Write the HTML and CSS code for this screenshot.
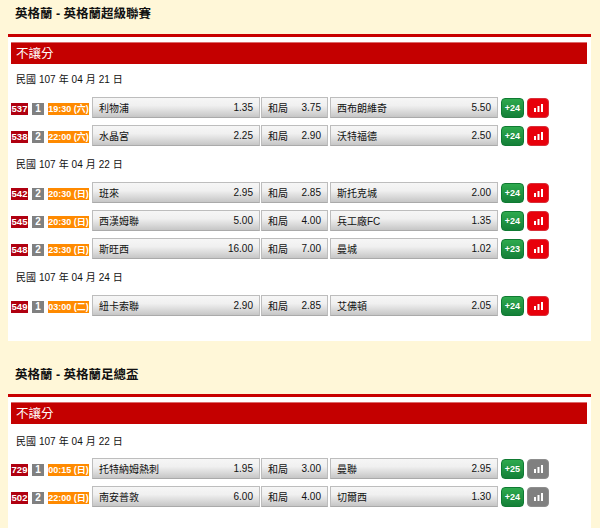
FILE: index.html
```html
<!DOCTYPE html>
<html lang="zh-Hant">
<head>
<meta charset="utf-8">
<title>英格蘭</title>
<link rel="stylesheet" href="styles.css">
</head>
<body>
<svg class="defs" width="0" height="0"><symbol id="bars" viewBox="0 0 9 8"><path d="M0 4h2v4H0zM3.500 2h2v6h-2zM7 0h2v8H7z" fill="currentColor"/></symbol></svg>

<section class="league">
  <h2 class="league-title">英格蘭 - 英格蘭超級聯賽</h2>
  <div class="panel">
    <h3 class="bar">不讓分</h3>
    <p class="date">民國 107 年 04 月 21 日</p>
    <div class="match">
      <span class="id">537</span><span class="num">1</span><span class="time">19:30 (六)</span>
      <div class="odd o-home"><span>利物浦</span><span>1.35</span></div>
      <div class="odd o-draw"><span>和局</span><span>3.75</span></div>
      <div class="odd o-away"><span>西布朗維奇</span><span>5.50</span></div>
      <span class="more">+24</span><span class="stat"><svg class="ico"><use href="#bars"/></svg></span>
    </div>
    <div class="match">
      <span class="id">538</span><span class="num">2</span><span class="time">22:00 (六)</span>
      <div class="odd o-home"><span>水晶宮</span><span>2.25</span></div>
      <div class="odd o-draw"><span>和局</span><span>2.90</span></div>
      <div class="odd o-away"><span>沃特福德</span><span>2.50</span></div>
      <span class="more">+24</span><span class="stat"><svg class="ico"><use href="#bars"/></svg></span>
    </div>
    <p class="date">民國 107 年 04 月 22 日</p>
    <div class="match">
      <span class="id">542</span><span class="num">2</span><span class="time">20:30 (日)</span>
      <div class="odd o-home"><span>班來</span><span>2.95</span></div>
      <div class="odd o-draw"><span>和局</span><span>2.85</span></div>
      <div class="odd o-away"><span>斯托克城</span><span>2.00</span></div>
      <span class="more">+24</span><span class="stat"><svg class="ico"><use href="#bars"/></svg></span>
    </div>
    <div class="match">
      <span class="id">545</span><span class="num">2</span><span class="time">20:30 (日)</span>
      <div class="odd o-home"><span>西漢姆聯</span><span>5.00</span></div>
      <div class="odd o-draw"><span>和局</span><span>4.00</span></div>
      <div class="odd o-away"><span>兵工廠FC</span><span>1.35</span></div>
      <span class="more">+24</span><span class="stat"><svg class="ico"><use href="#bars"/></svg></span>
    </div>
    <div class="match">
      <span class="id">548</span><span class="num">2</span><span class="time">23:30 (日)</span>
      <div class="odd o-home"><span>斯旺西</span><span>16.00</span></div>
      <div class="odd o-draw"><span>和局</span><span>7.00</span></div>
      <div class="odd o-away"><span>曼城</span><span>1.02</span></div>
      <span class="more">+23</span><span class="stat"><svg class="ico"><use href="#bars"/></svg></span>
    </div>
    <p class="date">民國 107 年 04 月 24 日</p>
    <div class="match">
      <span class="id">549</span><span class="num">1</span><span class="time">03:00 (二)</span>
      <div class="odd o-home"><span>紐卡索聯</span><span>2.90</span></div>
      <div class="odd o-draw"><span>和局</span><span>2.85</span></div>
      <div class="odd o-away"><span>艾佛頓</span><span>2.05</span></div>
      <span class="more">+24</span><span class="stat"><svg class="ico"><use href="#bars"/></svg></span>
    </div>
  </div>
</section>

<section class="league">
  <h2 class="league-title">英格蘭 - 英格蘭足總盃</h2>
  <div class="panel">
    <h3 class="bar">不讓分</h3>
    <p class="date">民國 107 年 04 月 22 日</p>
    <div class="match">
      <span class="id">729</span><span class="num">1</span><span class="time">00:15 (日)</span>
      <div class="odd o-home"><span>托特納姆熱刺</span><span>1.95</span></div>
      <div class="odd o-draw"><span>和局</span><span>3.00</span></div>
      <div class="odd o-away"><span>曼聯</span><span>2.95</span></div>
      <span class="more">+25</span><span class="stat off"><svg class="ico"><use href="#bars"/></svg></span>
    </div>
    <div class="match">
      <span class="id">502</span><span class="num">2</span><span class="time">22:00 (日)</span>
      <div class="odd o-home"><span>南安普敦</span><span>6.00</span></div>
      <div class="odd o-draw"><span>和局</span><span>4.00</span></div>
      <div class="odd o-away"><span>切爾西</span><span>1.30</span></div>
      <span class="more">+24</span><span class="stat off"><svg class="ico"><use href="#bars"/></svg></span>
    </div>
  </div>
</section>
</body>
</html>
```
FILE: styles.css
```css
* { box-sizing: border-box; }
html, body { margin: 0; padding: 0; }
body {
  width: 600px;
  height: 528px;
  overflow: hidden;
  background: #fff7d8;
  font-family: "Liberation Sans", "Noto Sans CJK TC", sans-serif;
  font-size: 12px;
  color: #111;
}
.defs { position: absolute; }
.league { margin: 0 9px 0 8px; }
.league-title {
  margin: 0;
  padding-left: 7px;
  height: 34px;
  line-height: 29px;
  font-size: 12.500px;
  font-weight: 700;
  color: #111;
}
.league + .league .league-title {
  height: 53px;
  padding-top: 20px;
}
.panel {
  background: #fff;
  border-top: 3px solid #c80000;
  padding: 5px 4px 18px 3px;
}
.bar {
  margin: 0;
  height: 22px;
  padding-left: 5px;
  background: #c40000;
  border-top: 1px solid #dc6a6a;
  color: #fff;
  font-size: 12.500px;
  font-weight: 400;
  line-height: 22px;
}
.date {
  margin: 0;
  height: 33px;
  padding-left: 5px;
  line-height: 31px;
  font-size: 10px;
  word-spacing: 0.200px;
}
.panel .match + .date { margin-top: 8px; height: 28px; line-height: 22px; }
.league + .league .bar + .date { height: 34px; line-height: 35px; }
.match {
  display: flex;
  align-items: center;
  height: 21px;
  margin-bottom: 7px;
}
.id, .num, .time {
  height: 12px;
  margin-top: 3px;
  line-height: 12px;
  color: #fff;
  font-weight: 700;
  text-align: center;
  white-space: nowrap;
  overflow: hidden;
}
.id { width: 17px; background: #b00010; font-size: 9.500px; }
.num { width: 12px; margin-left: 4px; background: #808080; font-size: 10px; }
.time { width: 41px; margin-left: 4px; margin-right: 3px; background: #ff8a00; font-size: 9px; }
.odd {
  display: flex;
  justify-content: space-between;
  align-items: center;
  height: 21px;
  padding: 0 6px;
  border: 1px solid #bdbdbd;
  border-bottom-color: #aaa;
  background: linear-gradient(#f6f6f6, #f0f0f0 40%, #c6c6c6);
  font-size: 10px;
  color: #111;
  white-space: nowrap;
}
.o-home { width: 168px; }
.o-draw { width: 67px; margin-left: 1px; }
.o-away { width: 168px; margin-left: 2px; }
.more {
  width: 23px;
  height: 20px;
  margin-left: 3px;
  border: 1px solid #0f7a32;
  border-radius: 4px;
  background: linear-gradient(#2eaa4e, #148038);
  color: #fff;
  font-size: 9px;
  font-weight: 700;
  line-height: 18px;
  text-align: center;
}
.stat {
  display: flex;
  align-items: center;
  justify-content: center;
  width: 22px;
  height: 20px;
  margin-left: 3px;
  border-radius: 4px;
  background: #e8000b;
  border: 1px solid #d8303a;
  color: #fff;
}
.stat.off { background: #808080; border-color: #8e8e8e; }
.ico { width: 9px; height: 8px; }
```
